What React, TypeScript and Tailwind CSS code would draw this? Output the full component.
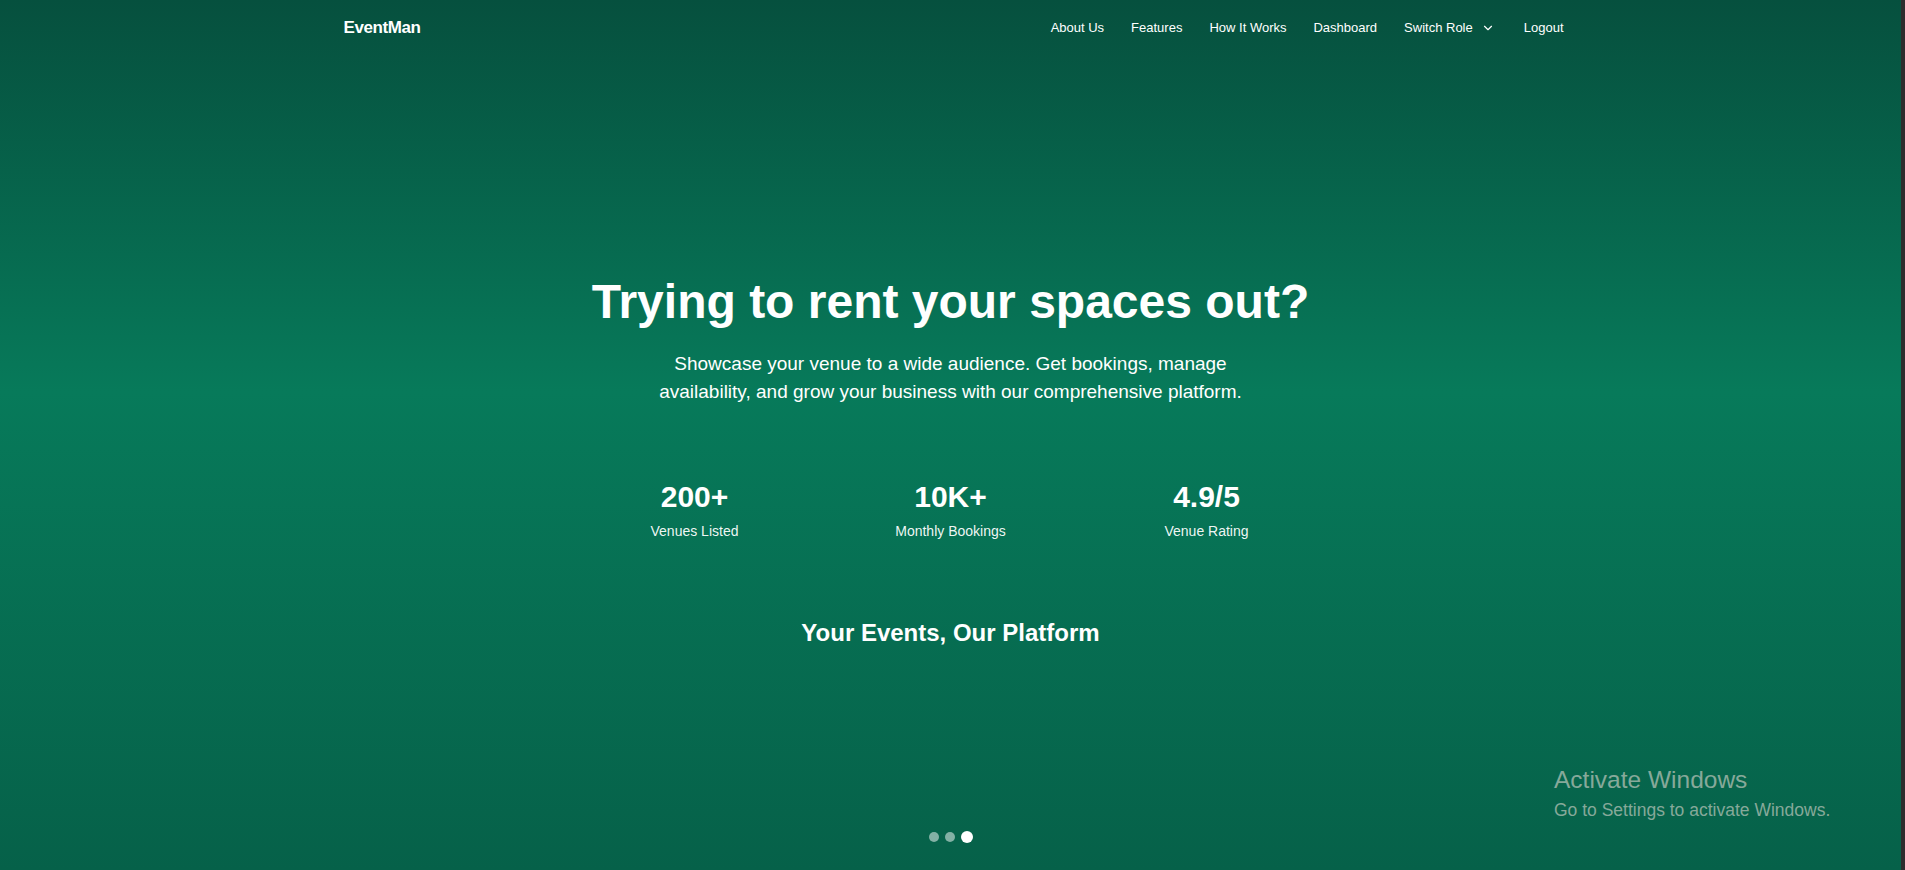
import { ChevronDown } from 'lucide-react';

const navLinks = ['About Us', 'Features', 'How It Works', 'Dashboard'];

const stats = [
  { value: '200+', label: 'Venues Listed' },
  { value: '10K+', label: 'Monthly Bookings' },
  { value: '4.9/5', label: 'Venue Rating' },
];

const Navbar = () => (
  <nav className="h-14 shrink-0">
    <div className="max-w-7xl mx-auto h-full pl-[33px] pr-[27px] flex items-center justify-between">
      <span className="text-[17px] font-bold tracking-tight text-white">EventMan</span>
      <div className="flex items-center gap-[27px] text-[13px] text-white">
        {navLinks.map((link) => (
          <a key={link} href="#" className="hover:text-emerald-200 transition-colors">
            {link}
          </a>
        ))}
        <button className="flex items-center gap-2 hover:text-emerald-200">
          Switch Role
          <ChevronDown className="w-3.5 h-3.5" strokeWidth={2} />
        </button>
        <button className="ml-0.5 hover:text-emerald-200">Logout</button>
      </div>
    </div>
  </nav>
);

const Hero = () => (
  <main className="relative flex-1 flex items-center justify-center">
    <div className="flex flex-col items-center text-center text-white">
      <h1 className="text-5xl font-bold leading-none">Trying to rent your spaces out?</h1>
      <p className="mt-6 max-w-[640px] text-[19px] leading-7">
        Showcase your venue to a wide audience. Get bookings, manage availability, and grow your
        business with our comprehensive platform.
      </p>

      <div className="mt-[73px] w-[768px] grid grid-cols-3">
        {stats.map((s) => (
          <div key={s.label} className="flex flex-col items-center">
            <span className="text-3xl font-bold">{s.value}</span>
            <span className="mt-1.5 text-sm text-white/95">{s.label}</span>
          </div>
        ))}
      </div>

      <h2 className="mt-[76px] text-2xl font-bold">Your Events, Our Platform</h2>
    </div>

    {/* carousel indicators */}
    <div className="absolute bottom-[27px] left-0 right-0 flex items-center justify-center gap-1.5">
      <span className="w-2.5 h-2.5 rounded-full bg-white/50" />
      <span className="w-2.5 h-2.5 rounded-full bg-white/50" />
      <span className="w-3 h-3 rounded-full bg-white" />
    </div>

    {/* os watermark */}
    <div className="absolute left-[1554px] top-[709px] text-[#86a99a]">
      <div className="text-[24.5px] leading-[30px]">Activate Windows</div>
      <div className="text-[17.5px] leading-[22px] mt-1">Go to Settings to activate Windows.</div>
    </div>
  </main>
);

export default function App() {
  return (
    <div className="flex h-screen w-full overflow-hidden" style={{ fontFamily: '"Liberation Sans", Arial, sans-serif' }}>
      <div className="flex-1 flex flex-col bg-linear-to-b from-[#06503e] via-[#077a5a] via-45% to-[#066149]">
        <Navbar />
        <Hero />
      </div>
      <div className="w-1 bg-[#2d2d2d]" />
    </div>
  );
}
